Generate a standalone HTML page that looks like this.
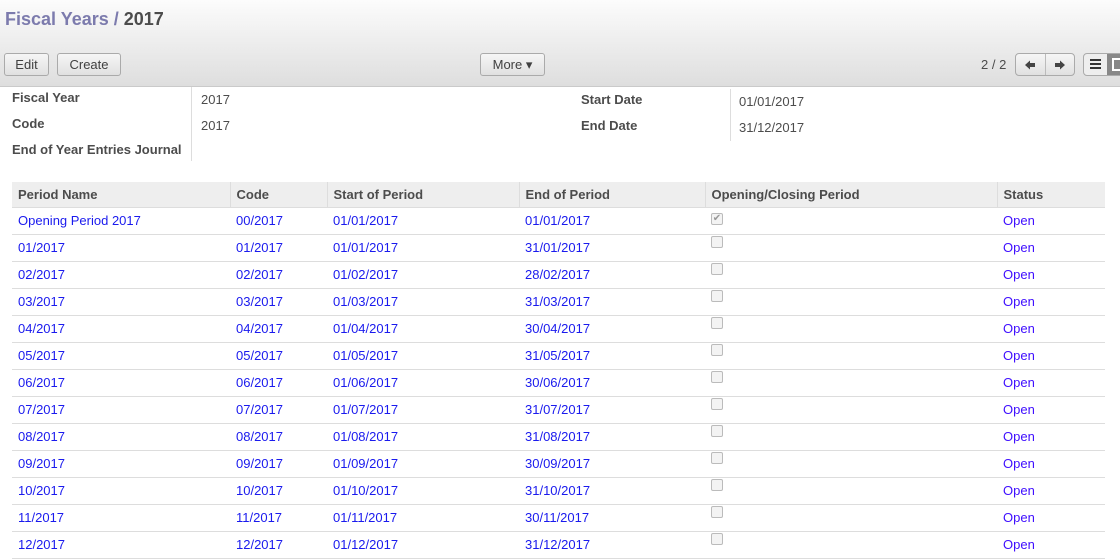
<!DOCTYPE html>
<html><head><style>
*{box-sizing:border-box;margin:0;padding:0}
body{width:1120px;height:557px;overflow:hidden;font-family:"Liberation Sans",Arial,sans-serif;font-size:13px;color:#4c4c4c;background:#fff;position:relative}
.hdr{position:absolute;left:0;top:0;width:1120px;height:87px;background:linear-gradient(#fcfcfc,#dedede);border-bottom:1px solid #cacaca}
.title{position:absolute;left:5px;top:9px;font-size:18px;font-weight:bold;color:#7c7bad}
.title b{color:#4c4c4c}
.btn{position:absolute;top:53px;height:23px;border:1px solid #aaa;border-radius:3px;background:linear-gradient(#f6f6f6,#e0e0e0);font-size:13px;color:#404040;text-align:center;line-height:21px}
.lbl{position:absolute;font-weight:bold;color:#4c4c4c}
.val{position:absolute;color:#4c4c4c}
.vl{position:absolute;width:1px;background:#ddd}
table{position:absolute;left:12px;top:182px;width:1093px;border-collapse:collapse}
th{height:25px;background:#eee;text-align:left;font-weight:bold;padding-left:6px;border-left:1px solid #ddd;border-bottom:1px solid #ddd;color:#4c4c4c}
th:first-child{border-left:none}
td{height:27px;padding-left:6px;color:#1a1aee;border-bottom:1px solid #ddd;vertical-align:middle}
td:last-child{color:#4010ff}
.cb{display:inline-block;width:12px;height:12px;border:1px solid #bbb;border-radius:2px;background:#f3f3f3;position:relative;top:-4px;font-size:10px;line-height:10px;color:#999;text-align:center}
</style></head><body>
<div class="hdr">
<div class="title">Fiscal Years / <b>2017</b></div>
<div class="btn" style="left:4px;width:45px">Edit</div>
<div class="btn" style="left:57px;width:64px">Create</div>
<div class="btn" style="left:480px;width:65px">More ▾</div>
<div style="position:absolute;left:981px;top:57px;font-size:13px;color:#4c4c4c">2 / 2</div>
<div class="btn" style="left:1015px;width:60px;border-radius:4px"><div style="position:absolute;left:29px;top:0;width:1px;height:21px;background:#bbb"></div></div>
<svg style="position:absolute;left:1017px;top:59px" width="56" height="12"><path d="M8 6 L13 1.5 V4 H18 V8 H13 V10.5 Z M48 6 L43 1.5 V4 H38 V8 H43 V10.5 Z" fill="#444"/></svg>
<div class="btn" style="left:1083px;width:50px;border-radius:4px;background:#eee"></div>
<div style="position:absolute;left:1107px;top:54px;width:13px;height:21px;background:#888"></div>
<svg style="position:absolute;left:1090px;top:59px" width="12" height="10"><path d="M0 1H11M0 5H11M0 9H11" stroke="#333" stroke-width="2"/></svg>
<div style="position:absolute;left:1112px;top:58px;width:8px;height:13px;border:2px solid #fff;border-right:none"></div>
</div>
<div class="lbl" style="left:12px;top:90px">Fiscal Year</div>
<div class="lbl" style="left:12px;top:116px">Code</div>
<div class="lbl" style="left:12px;top:142px">End of Year Entries Journal</div>
<div class="vl" style="left:191px;top:87px;height:74px"></div>
<div class="val" style="left:201px;top:92px">2017</div>
<div class="val" style="left:201px;top:118px">2017</div>
<div class="lbl" style="left:581px;top:92px">Start Date</div>
<div class="lbl" style="left:581px;top:118px">End Date</div>
<div class="vl" style="left:730px;top:89px;height:52px"></div>
<div class="val" style="left:739px;top:94px">01/01/2017</div>
<div class="val" style="left:739px;top:120px">31/12/2017</div>
<table>
<tr><th style="width:218px">Period Name</th><th style="width:97px">Code</th><th style="width:192px">Start of Period</th><th style="width:186px">End of Period</th><th style="width:292px">Opening/Closing Period</th><th>Status</th></tr>
<tr><td>Opening Period 2017</td><td>00/2017</td><td>01/01/2017</td><td>01/01/2017</td><td><span class="cb">✔</span></td><td>Open</td></tr>
<tr><td>01/2017</td><td>01/2017</td><td>01/01/2017</td><td>31/01/2017</td><td><span class="cb"></span></td><td>Open</td></tr>
<tr><td>02/2017</td><td>02/2017</td><td>01/02/2017</td><td>28/02/2017</td><td><span class="cb"></span></td><td>Open</td></tr>
<tr><td>03/2017</td><td>03/2017</td><td>01/03/2017</td><td>31/03/2017</td><td><span class="cb"></span></td><td>Open</td></tr>
<tr><td>04/2017</td><td>04/2017</td><td>01/04/2017</td><td>30/04/2017</td><td><span class="cb"></span></td><td>Open</td></tr>
<tr><td>05/2017</td><td>05/2017</td><td>01/05/2017</td><td>31/05/2017</td><td><span class="cb"></span></td><td>Open</td></tr>
<tr><td>06/2017</td><td>06/2017</td><td>01/06/2017</td><td>30/06/2017</td><td><span class="cb"></span></td><td>Open</td></tr>
<tr><td>07/2017</td><td>07/2017</td><td>01/07/2017</td><td>31/07/2017</td><td><span class="cb"></span></td><td>Open</td></tr>
<tr><td>08/2017</td><td>08/2017</td><td>01/08/2017</td><td>31/08/2017</td><td><span class="cb"></span></td><td>Open</td></tr>
<tr><td>09/2017</td><td>09/2017</td><td>01/09/2017</td><td>30/09/2017</td><td><span class="cb"></span></td><td>Open</td></tr>
<tr><td>10/2017</td><td>10/2017</td><td>01/10/2017</td><td>31/10/2017</td><td><span class="cb"></span></td><td>Open</td></tr>
<tr><td>11/2017</td><td>11/2017</td><td>01/11/2017</td><td>30/11/2017</td><td><span class="cb"></span></td><td>Open</td></tr>
<tr><td>12/2017</td><td>12/2017</td><td>01/12/2017</td><td>31/12/2017</td><td><span class="cb"></span></td><td>Open</td></tr>
</table>
</body></html>
